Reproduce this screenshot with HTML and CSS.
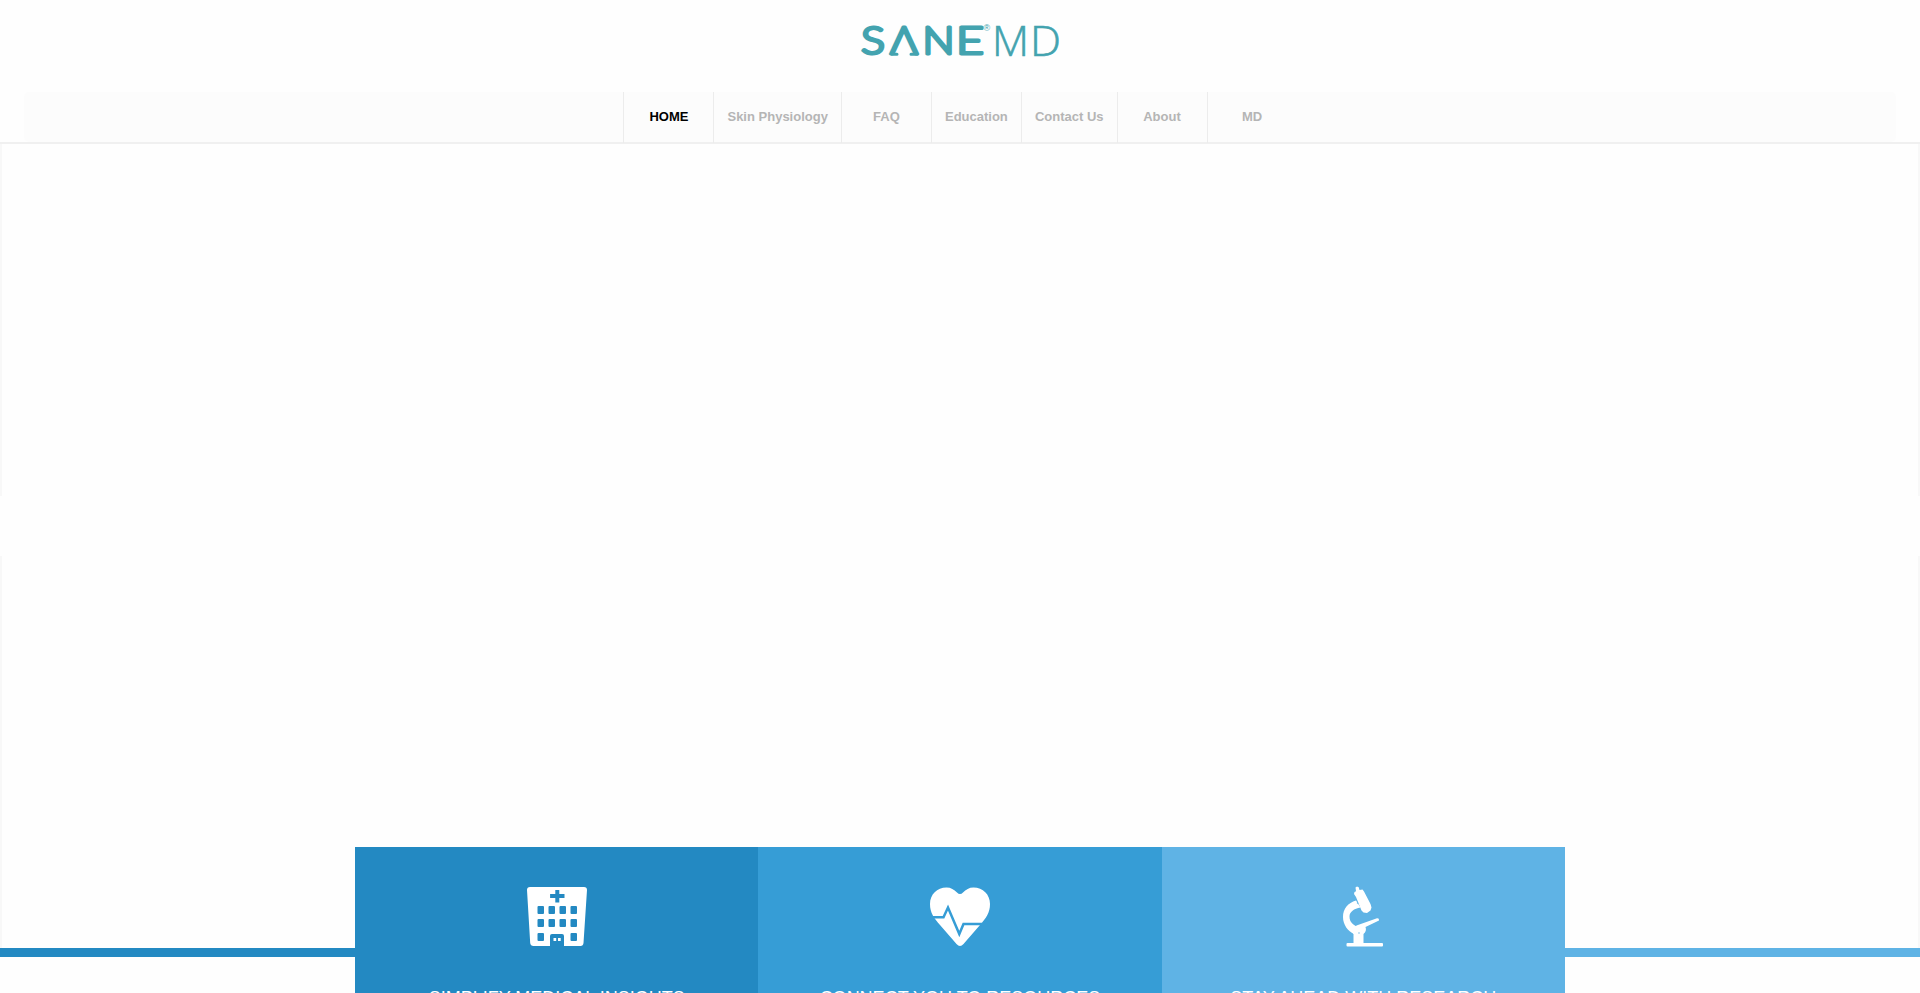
FILE: index.html
```html
<!DOCTYPE html>
<html lang="en">
<head>
  <meta charset="UTF-8" />
  <meta name="viewport" content="width=device-width, initial-scale=1.0"/>
  <title>SANE MD</title>
  <link rel="stylesheet" href="styles.css">
</head>
<body>

  <!-- Header -->
  <header class="header">
    <a class="logo" href="#">
      <svg width="220" height="60" viewBox="850 10 220 60">
        <g class="logo-bold">
          <text x="861" y="54" textLength="24" lengthAdjust="spacingAndGlyphs">S</text>
          <text x="890" y="54" textLength="28" lengthAdjust="spacingAndGlyphs">Λ</text>
          <text x="922.5" y="54" textLength="32" lengthAdjust="spacingAndGlyphs">N</text>
          <text x="956" y="54" textLength="28" lengthAdjust="spacingAndGlyphs">E</text>
        </g>
        <path class="logo-feet" d="M892 54.200h5M911 54.200h6"/>
        <text class="logo-reg" x="983.5" y="30.5">®</text>
        <text class="logo-light" x="992" y="55.7" textLength="37" lengthAdjust="spacingAndGlyphs">M</text>
        <text class="logo-light" x="1030" y="55.7" textLength="31" lengthAdjust="spacingAndGlyphs">D</text>
      </svg>
    </a>
    <nav class="nav">
      <ul class="menu">
        <li class="active"><a href="#">HOME</a></li>
        <li><a href="#">Skin Physiology</a></li>
        <li><a href="#">FAQ</a></li>
        <li><a href="#">Education</a></li>
        <li><a href="#">Contact Us</a></li>
        <li><a href="#">About</a></li>
        <li><a href="#">MD</a></li>
      </ul>
    </nav>
  </header>

  <!-- Slider -->
  <section class="slider">
    <div class="slide slide-top"></div>
    <div class="slide slide-bottom"></div>
  </section>

  <!-- Features -->
  <section class="features">
    <div class="line line-left"></div>
    <div class="feature feature-1">
      <svg width="62" height="62" viewBox="0 0 62 62">
        <path fill="#fff" d="M4 1h54q3 0 3 3l-3.500 53q-.300 3-3 3H38V50q0-2-2-2H26q-2 0-2 2V60H7.500q-3 0-3.300-3L1 4q0-3 3-3z"/>
        <path class="cut-1" d="M29.300 4h4v4h5.200v4h-5.200v4.500h-4V12h-5.200V8h5.200z"/>
        <g class="cut-1">
          <rect x="11.500" y="20" width="6.500" height="8" rx="1"/>
          <rect x="22.500" y="20" width="6.500" height="8" rx="1"/>
          <rect x="33.500" y="20" width="6.500" height="8" rx="1"/>
          <rect x="44.500" y="20" width="6.500" height="8" rx="1"/>
          <rect x="11.500" y="33" width="6.500" height="8" rx="1"/>
          <rect x="22.500" y="33" width="6.500" height="8" rx="1"/>
          <rect x="33.500" y="33" width="6.500" height="8" rx="1"/>
          <rect x="44.500" y="33" width="6.500" height="8" rx="1"/>
          <rect x="11.500" y="47" width="6.500" height="8" rx="1"/>
          <rect x="44.500" y="47" width="6.500" height="8" rx="1"/>
        </g>
        <path fill="#fff" d="M27.500 52h2.700v3h-2.700zM32 52h2.700v3H32z"/>
      </svg>
      <h3>SIMPLIFY MEDICAL INSIGHTS</h3>
    </div>
    <div class="feature feature-2">
      <svg width="62" height="62" viewBox="0 0 62 62">
        <path fill="#fff" d="M28 6.500Q31 9.500 34 6.500C37 3.500 40 1.500 44.500 1.500C54 1.500 61 8.500 61 18C61 27 57 32 51 39L34.500 58Q31 62 27.500 58L11 39C5 32 1 27 1 18C1 8.500 8 1.500 17.500 1.500C22 1.500 25 3.500 28 6.500z"/>
        <path class="pulse" d="M3 31.300h11.500L19 21.500L30.300 48L34.500 38H53"/>
      </svg>
      <h3>CONNECT YOU TO RESOURCES</h3>
    </div>
    <div class="feature feature-3">
      <svg width="62" height="62" viewBox="-9 0 62 62">
        <g fill="#fff">
          <path d="M14.500 1.500L16 .500L17.700 1.300L18.500 4L21.500 3.500L23 5.500L29.500 18L30.500 21.500L29.500 24.500L26 27L22.500 26.500L20.500 24.500L15 11L13 8L13.500 6L15 5.200z"/>
          <path d="M15 14.500C7 17 2 22.500 2 31C2 39 7 45 13 48L17 41C12 39 8.500 36 8.500 30.500C8.500 26 13 22.500 19.500 21.500z"/>
          <path d="M15.500 39.500L36 32.200Q38.500 32 38 34.500L24.500 41Q26 45 22.500 48V57.500H12.500V48L10 45z"/>
          <rect x="5.500" y="57" width="36.500" height="3.500" rx="1"/>
        </g>
        <circle class="cut-3" cx="16.500" cy="17" r=".7"/>
        <circle class="cut-3" cx="18" cy="47" r=".7"/>
      </svg>
      <h3>STAY AHEAD WITH RESEARCH</h3>
    </div>
    <div class="line line-right"></div>
  </section>

</body>
</html>
```
FILE: styles.css
```css
body {
  margin: 0;
  font-family: "Liberation Sans", Arial, sans-serif;
  background: #fefefe;
  height: 993px;
  overflow: hidden;
}

.header {
  height: 144px;
  box-sizing: border-box;
  border-bottom: 2px solid #f0f0f0;
}

.logo {
  display: block;
  width: 220px;
  height: 82px;
  padding-top: 10px;
  margin: 0 auto;
}

.logo svg,
.feature svg {
  display: block;
}

.logo text {
  fill: #43a3af;
}

.logo-bold text {
  font-family: Lato, sans-serif;
  font-size: 38px;
  font-weight: 300;
  stroke: #43a3af;
  stroke-width: 3px;
  stroke-linejoin: round;
}

.logo-feet {
  stroke: #43a3af;
  stroke-width: 3px;
  stroke-linecap: round;
}

.logo .logo-reg {
  font-size: 9px;
}

.logo .logo-light {
  font-family: "Open Sans", sans-serif;
  font-size: 42px;
  font-weight: 300;
  stroke: #43a3af;
  stroke-width: 0.6px;
}

.nav {
  height: 50px;
  margin: 0 24px;
  background: #fcfcfc;
  border-radius: 5px;
}

.menu {
  display: flex;
  justify-content: center;
  list-style: none;
  margin: 0;
  padding: 0;
}

.menu li {
  box-sizing: border-box;
  min-width: 90px;
  height: 51px;
  padding: 0 13px;
  border-left: 1px solid #ececec;
  text-align: center;
}

.menu a {
  font-size: 13px;
  font-weight: bold;
  line-height: 49px;
  color: #b5b5b5;
  text-decoration: none;
}

.menu .active a {
  color: #000;
}

.slider {
  display: flex;
  flex-direction: column;
  gap: 60px;
  height: 703px;
}

.slide {
  flex: none;
  border: solid #f8f8f8;
  border-width: 0 2px;
}

.slide-top {
  height: 352px;
}

/* runs on behind the feature row, down to the coloured line */
.slide-bottom {
  height: 392px;
}

.features {
  display: grid;
  grid-template-columns: 355px 1fr 1fr 1fr 355px;
}

.line {
  height: 9px;
  margin-top: 101px;
}

.line-left,
.feature-1 {
  background: #2389c2;
}

.feature-2 {
  background: #369dd6;
}

.line-right,
.feature-3 {
  background: #5fb3e5;
}

.feature {
  display: flex;
  flex-direction: column;
  align-items: center;
  height: 300px;
  padding-top: 39px;
  box-sizing: border-box;
}

.feature h3 {
  margin: 38px 0 0;
  font-size: 18px;
  font-weight: normal;
  line-height: 24px;
  color: #fff;
  white-space: nowrap;
}

.cut-1 {
  fill: #2389c2;
}

.cut-3 {
  fill: #5fb3e5;
}

.pulse {
  fill: none;
  stroke: #369dd6;
  stroke-width: 2.5px;
}
```
